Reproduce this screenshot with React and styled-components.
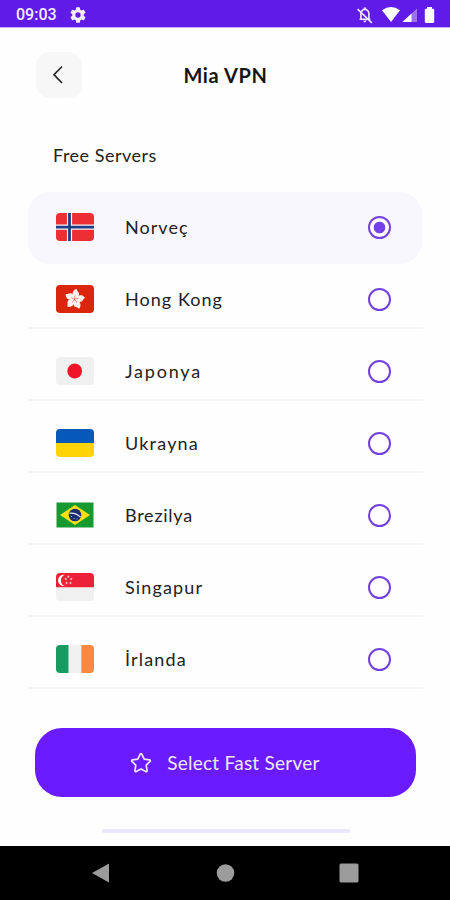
import React, { useState } from "react";
import styled, { createGlobalStyle } from "styled-components";

const GlobalStyle = createGlobalStyle`
  * { box-sizing: border-box; }
  body { margin: 0; background: #fff; }
`;

const Screen = styled.div`
  width: 450px;
  height: 900px;
  display: flex;
  flex-direction: column;
  overflow: hidden;
  background: #fefefe;
  color: #222;
  font-family: Lato, "Noto Sans", sans-serif;
`;

const StatusBar = styled.div`
  height: 28px;
  flex: none;
  display: flex;
  align-items: center;
  padding: 2px 15px 0 16px;
  background: #611be8;
  border-bottom: 1px solid #c4aaf7;
  color: #f3edff;
`;

const Clock = styled.span`
  width: 54px;
  font: 500 16px/20px Roboto, sans-serif;
`;

const StatusIcons = styled.div`
  margin-left: auto;
  display: flex;
  align-items: center;
`;

const Header = styled.header`
  height: 94px;
  flex: none;
  display: grid;
  grid-template-columns: 46px 1fr 46px;
  align-items: center;
  padding: 0 35px 1px 36px;
`;

const BackButton = styled.button`
  width: 46px;
  height: 46px;
  border: 0;
  padding: 0 3px 0 0;
  border-radius: 14px;
  background: #f7f7f7;
  display: flex;
  align-items: center;
  justify-content: center;
`;

const Title = styled.h1`
  margin: 0;
  text-align: center;
  font-size: 20px;
  line-height: 24px;
  font-weight: 700;
  color: #161616;
  letter-spacing: ${(p) => p.$spacing}px;
`;

const SectionTitle = styled.h2`
  margin: 21px 0 25px 53px;
  font-size: 18px;
  line-height: 24px;
  font-weight: 400;
  letter-spacing: ${(p) => p.$spacing}px;
`;

const ServerList = styled.ul`
  list-style: none;
  margin: 0 27px 0 28px;
  padding: 0;
  height: 498px;
  flex: none;
`;

const ServerRow = styled.li`
  height: ${(p) => (p.$selected ? 72 : 58)}px;
  margin-bottom: ${(p) => (p.$selected ? 7 : 14)}px;
  margin-right: ${(p) => (p.$selected ? 1 : 0)}px;
  padding: 0 ${(p) => (p.$selected ? "31px 2px" : "32px 0")} 28px;
  border-radius: ${(p) => (p.$selected ? 22 : 0)}px;
  border-bottom: ${(p) => (p.$selected ? "0" : "2px solid #f5f5f7")};
  background: ${(p) => (p.$selected ? "#f8f7fd" : "transparent")};
  display: flex;
  align-items: center;
`;

const Flag = styled.svg`
  width: 38px;
  height: 28px;
  flex: none;
  border-radius: ${(p) => p.$radius}px;
`;

const ServerName = styled.span`
  margin-left: 31px;
  flex: 1;
  font-size: 18px;
  line-height: 24px;
  letter-spacing: ${(p) => p.$spacing}px;
`;

const Radio = styled.button`
  width: 23px;
  height: 23px;
  padding: 0;
  border: 2px solid #7440df;
  border-radius: 50%;
  background: ${(p) => (p.$on ? "radial-gradient(circle, #7440e8 5.4px, #fff 6.2px)" : "#fff")};
`;

const FastButton = styled.button`
  height: 69px;
  flex: none;
  margin: 38px 34px 0 35px;
  padding: 0 1px 0 0;
  border: 0;
  border-radius: 27px;
  background: #6a1bff;
  color: #efe7ff;
  display: flex;
  align-items: center;
  justify-content: center;
  gap: 15px;
  font: 400 19px/24px Lato, sans-serif;
`;

const FastLabel = styled.span`
  letter-spacing: ${(p) => p.$spacing}px;
`;

const Indicator = styled.div`
  width: 248px;
  height: 4px;
  flex: none;
  margin: 32px 0 0 102px;
  border-radius: 2px;
  background: #ebe7fd;
`;

const NavBar = styled.nav`
  height: 54px;
  flex: none;
  margin-top: auto;
  padding: 0 91px;
  background: #000;
  display: flex;
  align-items: center;
  justify-content: space-between;
`;

const NavIcon = styled.svg`
  width: 20px;
  height: 20px;
  fill: #9c9c9c;
`;

function starPoints(cx, cy, outer, inner) {
  return Array.from({ length: 10 }, (_, i) => {
    const r = i % 2 ? inner : outer;
    const a = (Math.PI / 5) * i - Math.PI / 2;
    return `${cx + r * Math.cos(a)},${cy + r * Math.sin(a)}`;
  }).join(" ");
}

const flags = {
  no: (
    <>
      <path fill="#ee2e35" d="M0 0h38v28H0z" />
      <path stroke="#f8f5fb" strokeWidth="5.2" d="M13.5 0v28M0 14.2h38" />
      <path stroke="#1d3e82" strokeWidth="2.8" d="M13.5 0v28M0 14.2h38" />
    </>
  ),
  hk: (
    <>
      <path fill="#db250d" d="M0 0h38v28H0z" />
      {[0, 72, 144, 216, 288].map((a) => (
        <g key={a} transform={`rotate(${a + 10} 18.7 14.2)`}>
          <path fill="#fff2ef" d="M18.7 13.8C14.8 10.8 14.5 6.4 18.2 4c1.5-.2 1.1 1.5 2.2 2 3 1.8 2.2 5.7-1.7 7.8z" />
          <path d="M18.7 13.5q-1-1.7-.2-3.200" fill="none" stroke="#e75a47" strokeWidth=".6" />
        </g>
      ))}
    </>
  ),
  jp: (
    <>
      <path fill="#f0f0f0" d="M0 0h38v28H0z" />
      <circle cx="18.7" cy="14" r="7.4" fill="#f0142b" />
    </>
  ),
  ua: (
    <>
      <path fill="#0759b9" d="M0 0h38v14H0z" />
      <path fill="#ffd407" d="M0 14h38v14H0z" />
    </>
  ),
  br: (
    <>
      <path fill="#16992f" d="M.5 1.5h37v25H.5z" />
      <path fill="#f8df16" d="M19 4l15 10-15 10L4 14z" />
      <circle cx="19" cy="14" r="6.3" fill="#1b2d70" />
      <path fill="none" stroke="#e9edf2" strokeWidth="1.1" d="M13.2 12.2q6.7-.8 11.4 4" />
      <path fill="#a6b4d8" d="M15 15h1v1h-1zM17.5 17h1v1h-1zM20.5 17.5h1v1h-1z" />
    </>
  ),
  sg: (
    <>
      <path fill="#ec2037" d="M0 0h38v14.5H0z" />
      <path fill="#f0f0f0" d="M0 14.5h38V28H0z" />
      <path fill="#fff" d="M8.8 1.8a5.7 5.7 0 1 0 0 11.2 6 6 0 0 1 0-11.2z" />
      {[[12.4, 3.6], [9.8, 6], [15.2, 6], [10.6, 10], [14.5, 10]].map(([x, y]) => (
        <polygon key={`${x}-${y}`} points={starPoints(x, y, 1.5, 0.65)} fill="#ffd5da" />
      ))}
    </>
  ),
  ie: (
    <>
      <path fill="#179b61" d="M0 0h12.7v28H0z" />
      <path fill="#f1f1f1" d="M12.7 0h12.6v28H12.7z" />
      <path fill="#ff883e" d="M25.3 0H38v28H25.3z" />
    </>
  ),
};

const servers = [
  { code: "no", name: "Norveç", spacing: 1.05 },
  { code: "hk", name: "Hong Kong", spacing: 1.05 },
  { code: "jp", name: "Japonya", spacing: 1.8 },
  { code: "ua", name: "Ukrayna", spacing: 1.2 },
  { code: "br", name: "Brezilya", spacing: 0.75 },
  { code: "sg", name: "Singapur", spacing: 1.15 },
  { code: "ie", name: "İrlanda", spacing: 1.15 },
];

function GearIcon() {
  return (
    <svg width="16" height="16" viewBox="2 2 20 20" fill="#f3edff">
      <path d="M19.14 12.94c.04-.3.06-.61.06-.94s-.02-.64-.07-.94l2.03-1.58a.49.49 0 0 0 .12-.61l-1.92-3.32a.49.49 0 0 0-.59-.22l-2.39.96a7 7 0 0 0-1.62-.94l-.36-2.54a.48.48 0 0 0-.48-.41h-3.84a.47.47 0 0 0-.47.41l-.36 2.54c-.59.24-1.13.57-1.62.94l-2.39-.96a.48.48 0 0 0-.59.22L2.74 8.87a.47.47 0 0 0 .12.61l2.03 1.58a6 6 0 0 0 0 1.88l-2.03 1.58a.49.49 0 0 0-.12.61l1.92 3.32c.12.22.37.29.59.22l2.39-.96c.5.38 1.03.7 1.62.94l.36 2.54c.05.24.24.41.48.41h3.84c.24 0 .44-.17.47-.41l.36-2.54a7 7 0 0 0 1.62-.94l2.39.96c.22.08.47 0 .59-.22l1.92-3.32a.47.47 0 0 0-.12-.61zM12 15.3a3.3 3.3 0 1 1 0-6.6 3.3 3.3 0 0 1 0 6.6z" />
    </svg>
  );
}

function StatusGlyphs() {
  return (
    <svg width="79" height="18" viewBox="356 5 79 18">
      <g fill="none" stroke="#eee5ff" strokeWidth="1.6">
        <path d="M359.5 18.2h10.800M360.9 18V12.500q.3-3.500 4-4.200 3.700.7 4 4.200v5" />
        <path d="M357.6 8.1l14.2 13.7" />
      </g>
      <path fill="#eee5ff" d="M363.7 6.5h2.4v2h-2.4zM363.3 19.6h3.2q-.2 1.8-1.6 1.8t-1.6-1.8z" />
      <path fill="#fff" d="M382 9.3q9-6.5 18 0L391 21z" />
      <path fill="#9d70f2" d="M417 7.5V21h-14.5z" />
      <path fill="#fff" d="M411.5 12.6V21h-9z" />
      <path fill="#fff" d="M427 6h5v1.7h1.2q1 0 1 1v12q0 1.2-1.2 1.2h-7q-1.2 0-1.2-1.2v-12q0-1 1-1h1.2z" />
    </svg>
  );
}

export default function App() {
  const [selected, setSelected] = useState("no");
  return (
    <Screen>
      <GlobalStyle />
      <StatusBar>
        <Clock>09:03</Clock>
        <GearIcon />
        <StatusIcons>
          <StatusGlyphs />
        </StatusIcons>
      </StatusBar>
      <Header>
        <BackButton aria-label="Back">
          <svg width="12" height="20" viewBox="0 0 12 20" fill="none" stroke="#282828" strokeWidth="1.7">
            <path d="M10 1.5L2 9.7l8 8.3" />
          </svg>
        </BackButton>
        <Title $spacing={0.6}>Mia VPN</Title>
      </Header>
      <SectionTitle $spacing={0.5}>Free Servers</SectionTitle>
      <ServerList>
        {servers.map(({ code, name, spacing }) => (
          <ServerRow key={code} $selected={selected === code}>
            <Flag viewBox="0 0 38 28" $radius={code === "br" ? 0 : 4}>
              {flags[code]}
            </Flag>
            <ServerName $spacing={spacing}>{name}</ServerName>
            <Radio $on={selected === code} aria-label={name} onClick={() => setSelected(code)} />
          </ServerRow>
        ))}
      </ServerList>
      <FastButton>
        <svg width="22" height="22" viewBox="0 0 22 22" fill="none" stroke="#efe7ff" strokeWidth="1.7" strokeLinejoin="round">
          <path d="M10.2 2.2q.8-1.2 1.6 0l2.4 4.9 5.3.8q1.4.4.5 1.5l-3.8 3.8.9 5.4q0 1.4-1.3.9L11 17l-4.8 2.5q-1.3.5-1.3-.9l.9-5.4L2 9.4q-.9-1.1.5-1.5l5.3-.8z" />
        </svg>
        <FastLabel $spacing={0.25}>Select Fast Server</FastLabel>
      </FastButton>
      <Indicator />
      <NavBar>
        <NavIcon viewBox="0 0 20 20"><path d="M18 .5v19L1 10z" /></NavIcon>
        <NavIcon viewBox="0 0 20 20"><circle cx="10.5" cy="10" r="8.8" /></NavIcon>
        <NavIcon viewBox="0 0 20 20"><rect x=".5" y=".5" width="19" height="19" rx="1.5" /></NavIcon>
      </NavBar>
    </Screen>
  );
}
